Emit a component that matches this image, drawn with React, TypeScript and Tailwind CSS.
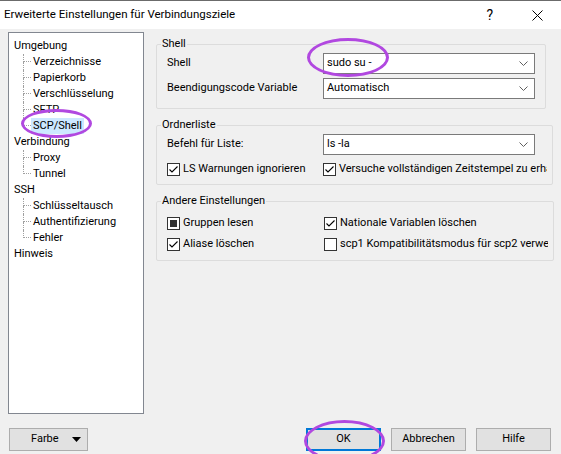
import React from 'react'

const FONT = "font-['Roboto','Liberation_Sans',sans-serif]"

type TreeItem = { label: string; child?: boolean; last?: boolean; selected?: boolean }

const TREE: TreeItem[] = [
  { label: 'Umgebung' },
  { label: 'Verzeichnisse', child: true },
  { label: 'Papierkorb', child: true },
  { label: 'Verschlüsselung', child: true },
  { label: 'SFTP', child: true },
  { label: 'SCP/Shell', child: true, last: true, selected: true },
  { label: 'Verbindung' },
  { label: 'Proxy', child: true },
  { label: 'Tunnel', child: true, last: true },
  { label: 'SSH' },
  { label: 'Schlüsseltausch', child: true },
  { label: 'Authentifizierung', child: true },
  { label: 'Fehler', child: true, last: true },
  { label: 'Hinweis' },
]

function Chevron() {
  return (
    <svg width="9" height="5" viewBox="0 0 9 5" className="shrink-0">
      <path d="M0.5 0.5 L4.5 4.5 L8.5 0.5" fill="none" stroke="#606060" strokeWidth="1" />
    </svg>
  )
}

function Combo({ value }: { value: string }) {
  return (
    <div className="w-[212px] h-[21px] bg-white border border-[#7a7a7a] flex items-center pl-[3px] pr-[6px]">
      <span className="flex-1 whitespace-nowrap">{value}</span>
      <Chevron />
    </div>
  )
}

// windows checkbox controls clip their caption at the control's own edge
function Check({ state, label, wide = false }: { state: 'on' | 'off' | 'mixed'; label: string; wide?: boolean }) {
  return (
    <div className={`flex items-center h-[16px] gap-[3px] whitespace-nowrap overflow-hidden ${wide ? 'w-[224px]' : ''}`}>
      <div className="w-[13px] h-[13px] shrink-0 bg-white border border-[#333333] flex items-center justify-center">
        {state === 'on' && (
          <svg width="11" height="11" viewBox="0 0 11 11">
            <path d="M1.5 5.5 L4 8 L9.5 2.5" fill="none" stroke="#000" strokeWidth="1.1" />
          </svg>
        )}
        {state === 'mixed' && <div className="w-[7px] h-[7px] bg-[#333333]" />}
      </div>
      <span>{label}</span>
    </div>
  )
}

function Group({ title, children, className = '' }: { title: string; children: React.ReactNode; className?: string }) {
  return (
    <fieldset className={`border border-[#dcdcdc] rounded-[2px] ${className}`}>
      <legend className="ml-[4px] px-[1px] leading-[14px]">{title}</legend>
      {children}
    </fieldset>
  )
}

function Button({ label, def = false }: { label: string; def?: boolean }) {
  return (
    <div
      className={`w-[75px] h-[23px] flex items-center justify-center bg-[#e1e1e1] ${
        def ? 'border-2 border-[#0078d7]' : 'border border-[#adadad]'
      }`}
    >
      {label}
    </div>
  )
}

export default function App() {
  return (
    <div className={`w-[561px] h-[454px] relative overflow-hidden bg-[#f0f0f0] flex flex-col text-[11px] text-black ${FONT}`}>
      {/* title bar */}
      <div className="h-[29px] bg-white border-t border-[#6b6b6b] flex items-center shrink-0">
        <span className="pl-[4px] text-[11.5px]">Erweiterte Einstellungen für Verbindungsziele</span>
        <span className="ml-auto mr-[39px] text-[14px] leading-none">?</span>
        <svg width="11" height="11" viewBox="0 0 11 11" className="mr-[18px]">
          <path d="M0.5 0.5 L10.5 10.5 M10.5 0.5 L0.5 10.5" stroke="#000" strokeWidth="1" />
        </svg>
      </div>

      <div className="flex mt-[3px]">
        {/* tree */}
        <div className="ml-[8px] w-[136px] h-[382px] bg-white border border-[#828790] pt-[5px] px-[5px]">
          {TREE.map(item => (
            <div key={item.label} className="flex h-[16px] items-center">
              {item.child && (
                <div className="ml-[9px] w-[8px] h-[16px] flex flex-col">
                  <div className="h-[8px] border-l border-b border-dotted border-[#a0a0a0]" />
                  <div className={`h-[8px] ${item.last ? '' : 'border-l border-dotted border-[#a0a0a0]'}`} />
                </div>
              )}
              <span className={`leading-[16px] ${item.child ? 'px-[2px]' : ''} ${item.selected ? 'bg-[#cce8ff]' : ''}`}>
                {item.label}
              </span>
            </div>
          ))}
        </div>

        {/* right panel */}
        <div className="ml-[12px] w-[390px] pt-[5px] flex flex-col">
          <Group title="Shell" className="pb-[9px]">
            <div className="grid grid-cols-[156px_1fr] gap-y-[4px] items-center px-[10px] mt-[2px]">
              <span>Shell</span>
              <Combo value="sudo su -" />
              <span>Beendigungscode Variable</span>
              <Combo value="Automatisch" />
            </div>
          </Group>

          <Group title="Ordnerliste" className="mt-[9px] pb-[7px]">
            <div className="grid grid-cols-[156px_1fr] gap-y-[6px] items-center pl-[10px] pr-[5px] mt-[2px]">
              <span>Befehl für Liste:</span>
              <Combo value="ls -la" />
              <Check state="on" label="LS Warnungen ignorieren" />
              <Check state="on" wide label="Versuche vollständigen Zeitstempel zu erhalten" />
            </div>
          </Group>

          <Group title="Andere Einstellungen" className="mt-[9px] pb-[8px]">
            <div className="grid grid-cols-[157px_1fr] gap-y-[5px] items-center pl-[10px] pr-[5px] mt-[7px]">
              <Check state="mixed" label="Gruppen lesen" />
              <Check state="on" label="Nationale Variablen löschen" />
              <Check state="on" label="Aliase löschen" />
              <Check state="off" wide label="scp1 Kompatibilitätsmodus für scp2 verwenden" />
            </div>
          </Group>
        </div>
      </div>

      {/* buttons */}
      <div className="flex items-center mt-[14px]">
        <div className="ml-[9px] w-[79px] h-[23px] bg-[#e1e1e1] border border-[#adadad] flex items-center pl-[21px] pr-[6px]">
          <span className="flex-1">Farbe</span>
          <svg width="9" height="5" viewBox="0 0 9 5">
            <path d="M0 0 L9 0 L4.5 5 Z" fill="#000" />
          </svg>
        </div>
        <div className="ml-auto mr-[10px] flex gap-[10px]">
          <Button label="OK" def />
          <Button label="Abbrechen" />
          <Button label="Hilfe" />
        </div>
      </div>

      {/* highlight annotations drawn over the dialog */}
      <div className="absolute left-[21px] top-[109px] w-[71px] h-[29px] rounded-[50%] border-[3px] border-[#b148e0]" />
      <div className="absolute left-[307px] top-[38px] w-[82px] h-[39px] rounded-[50%] border-[3px] border-[#b148e0]" />
      <div className="absolute left-[304px] top-[420px] w-[81px] h-[42px] rounded-[50%] border-[3px] border-[#b148e0]" />
    </div>
  )
}
